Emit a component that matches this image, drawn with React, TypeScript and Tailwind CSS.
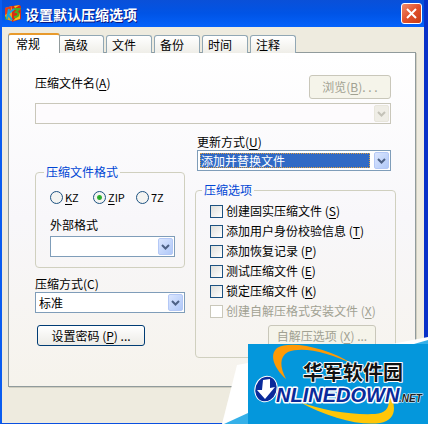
import { useState } from "react";
import type { ReactNode, SelectHTMLAttributes } from "react";
import clsx from "clsx";

const TABS = ["常规", "高级", "文件", "备份", "时间", "注释"];

const FORMATS = [
  { id: "kz", hot: "K", rest: "Z" },
  { id: "zip", hot: "Z", rest: "IP" },
  { id: "7z", hot: "", rest: "7Z" },
];

const OPTIONS = [
  { label: "创建固实压缩文件", hot: "S" },
  { label: "添加用户身份校验信息", hot: "T" },
  { label: "添加恢复记录", hot: "P" },
  { label: "测试压缩文件", hot: "E" },
  { label: "锁定压缩文件", hot: "K" },
  { label: "创建自解压格式安装文件", hot: "X", disabled: true },
];

function Hotkey({ children }: { children: ReactNode }) {
  return (
    <>
      (<span className="underline underline-offset-2">{children}</span>)
    </>
  );
}

type XpSelectProps = SelectHTMLAttributes<HTMLSelectElement> & {
  highlighted?: boolean;
};

function XpSelect({ highlighted, disabled, className, children, ...props }: XpSelectProps) {
  return (
    <div
      className={clsx(
        "relative h-[21px] border p-0.5",
        disabled ? "border-[#c9c7ba] bg-[#fdfbfd]" : "border-[#7f9db9] bg-white",
        className
      )}
    >
      <div className="h-full pr-[18px]">
        <select
          disabled={disabled}
          className={clsx(
            "block h-full w-full appearance-none text-xs leading-[13px] outline-none",
            highlighted
              ? "border border-dotted border-[#e0a040] bg-[#316ac5] text-white"
              : "px-px text-black"
          )}
          {...props}
        >
          {children}
        </select>
      </div>
      <span
        className={clsx(
          "pointer-events-none absolute inset-y-px right-px flex w-[15px] items-center justify-center rounded-xs border",
          disabled
            ? "border-[#e8e6dc] bg-[#efede6] text-[#c4c2b8]"
            : "border-[#b4c8f6] bg-linear-to-br from-[#dbe6fe] to-[#b0c8f8] text-[#4d6185]"
        )}
      >
        <svg width="9" height="6" viewBox="0 0 9 6" className="shrink-0" aria-hidden="true">
          <path d="M1 1l3.500 3.500L8 1" fill="none" stroke="currentColor" strokeWidth="2" />
        </svg>
      </span>
    </div>
  );
}

function AppIcon() {
  return (
    <svg width="17" height="17" viewBox="0 0 17 17" aria-hidden="true">
      <path d="M1 3l7-2v15l-7-2z" fill="#f0a018" />
      <path d="M1 3l7-2-2 6-5 3z" fill="#e33a1b" />
      <path d="M1 11l3 4-3-1z" fill="#37a52e" />
      <path d="M8 1l8-1 1 2v12l-9 3z" fill="#d92b12" />
      <path d="M10 1l6-1-5 3z" fill="#f5c518" />
      <path d="M9 16l7-8v6z" fill="#f5c518" />
      <path d="M10 4h5l-3 3c4 1 3 5-2 5" fill="none" stroke="#4caf20" strokeWidth="2" />
      <path d="M5 4L3 14M10 4L4 9l4 6" fill="none" stroke="#16a4e0" strokeWidth="2" />
    </svg>
  );
}

function Watermark() {
  return (
    <svg
      width="206"
      height="88"
      viewBox="0 0 206 88"
      className="pointer-events-none absolute right-0 bottom-0 z-20"
      role="img"
      aria-label="华军软件园 ONLINEDOWN.NET"
    >
      <path d="M15 29L26 27V88H0z" fill="#fff" />
      <path d="M2 88L26 77v11z" fill="#35b0e8" />
      <path d="M170 8L206 1v7z" fill="#fff" />
      <path d="M192 8L206 4v4z" fill="#35b0e8" />
      <rect x="26" y="8" width="180" height="80" fill="#0497dc" />
      <path
        d="M64 43C52 32 47 19 55 12C68 4 104 11 131 28C106 16 80 10 66 16C57 21 58 31 64 43z"
        fill="#ff9a05"
      />
      <path
        d="M76 65C106 82 138 90 158 87C175 84 175 70 166 53C169 70 166 77 153 78C130 79 100 75 76 65z"
        fill="#ffc608"
      />
      <text
        x="81"
        y="44"
        fontSize="20"
        fontWeight="700"
        fill="#111"
        stroke="#fff"
        strokeWidth="2"
        strokeLinejoin="round"
        paintOrder="stroke"
        fontFamily="'Liberation Sans', 'Noto Sans CJK SC', sans-serif"
      >
        华军软件园
      </text>
      <g fontFamily="'Liberation Sans', sans-serif" fontWeight="700" fontStyle="italic">
        <text
          x="54"
          y="66"
          fontSize="20"
          fill="#0a2a9a"
          stroke="#fff"
          strokeWidth="3"
          strokeLinejoin="round"
          paintOrder="stroke"
        >
          NLINEDOWN
        </text>
        <text
          x="177"
          y="66"
          fontSize="10"
          fill="#222"
          stroke="#fff"
          strokeWidth="1"
          strokeLinejoin="round"
          paintOrder="stroke"
        >
          .NET
        </text>
      </g>
      <ellipse cx="44" cy="53" rx="11" ry="13" transform="rotate(18 44 53)" fill="#0a2a9a" stroke="#fff" strokeWidth="1" />
      <path d="M41 44l7-1 0 9 5-1-10 12-8-9 5 0z" fill="#fff" />
    </svg>
  );
}

export default function App() {
  const [activeTab, setActiveTab] = useState(TABS[0]);
  const [format, setFormat] = useState("zip");

  return (
    <div className="relative">
      <div className="flex min-h-screen w-full flex-col border-r-4 border-b border-l-2 border-r-[#0831c8] border-b-[#0a50e0] border-l-[#0a5cf0] bg-[#eeebdf] font-['Noto_Sans_CJK_SC',sans-serif] text-xs leading-4 text-black">
        {/* Title bar */}
        <header className="flex h-[27px] items-center gap-1 bg-linear-to-b from-[#0a50d8] via-[#0054e6] to-[#0462fb] px-0.5">
          <AppIcon />
          <h1 className="flex-1 text-sm font-bold text-white [text-shadow:1px_1px_#0a1883]">
            设置默认压缩选项
          </h1>
          <button
            type="button"
            aria-label="关闭"
            className="flex size-[21px] items-center justify-center rounded-[3px] border border-white bg-linear-to-br from-[#ee8a68] via-[#e0502c] to-[#c83c14]"
          >
            <svg width="11" height="11" viewBox="0 0 11 11" aria-hidden="true">
              <path d="M1 1l9 9M10 1l-9 9" stroke="#fff" strokeWidth="2" />
            </svg>
          </button>
        </header>

        <main className="flex-1 pt-1.5 pr-2 pb-9 pl-1.5">
          {/* Tabs */}
          <div role="tablist" className="flex h-5 items-end gap-0.5">
            {TABS.map((tab) => (
              <button
                key={tab}
                type="button"
                role="tab"
                aria-selected={tab === activeTab}
                onClick={() => setActiveTab(tab)}
                className={clsx(
                  "rounded-t-[3px] border border-b-0 text-left",
                  tab === activeTab
                    ? "relative z-10 -mr-1 h-5 w-[52px] border-t-2 border-[#919b9c] border-t-[#e89a2c] bg-white pl-[7px]"
                    : "h-[18px] w-[46px] border-[#91a7b4] bg-linear-to-b from-white to-[#efeee8] pl-[5px]"
                )}
              >
                {tab}
              </button>
            ))}
          </div>

          <form
            onSubmit={(e) => e.preventDefault()}
            className="-mt-px border border-[#919b9c] bg-linear-to-b from-white via-[#f8f7fa] to-[#f6f3ec] pt-[22px] pr-[19px] pb-7 pl-[26px] shadow-[1px_1px_0_#d0cec0]"
          >
            <div className="mr-[5px] flex flex-col gap-1">
              <div className="flex items-start justify-between">
                <label htmlFor="archive-name">
                  压缩文件名<Hotkey>A</Hotkey>
                </label>
                <button
                  type="button"
                  disabled
                  className="h-6 w-[82px] rounded-[3px] border border-[#c9c7ba] bg-[#f5f4ea] text-[#a1a192]"
                >
                  浏览<Hotkey>B</Hotkey>. . .
                </button>
              </div>
              <XpSelect id="archive-name" disabled />
            </div>

            <div className="flex gap-2.5">
              {/* Format, method and password */}
              <div className="w-[150px] shrink-0 pt-10">
                <fieldset className="rounded-sm border border-[#d0d0bf] px-[9px] pt-[9px] pb-2.5 pl-3.5">
                  <legend className="-ml-1.5 px-0.5 text-[#0046d5]">压缩文件格式</legend>
                  <div className="-mr-1 grid grid-cols-3 text-[11px]">
                    {FORMATS.map(({ id, hot, rest }) => (
                      <label key={id} className="flex items-center gap-0.5">
                        <input
                          type="radio"
                          name="format"
                          value={id}
                          checked={format === id}
                          onChange={() => setFormat(id)}
                          className="size-[13px] shrink-0 appearance-none rounded-full border border-[#1d5281] bg-[#f4f4f2] checked:bg-[radial-gradient(circle,#21a121_0,#35b335_2px,#f4f4f2_3px)]"
                        />
                        <span>
                          <span className="underline underline-offset-2">{hot}</span>
                          {rest}
                        </span>
                      </label>
                    ))}
                  </div>
                  <label htmlFor="ext-format" className="mt-3 block">
                    外部格式
                  </label>
                  <XpSelect id="ext-format" className="mt-[3px]" />
                </fieldset>

                <label htmlFor="method" className="mt-2 block">
                  压缩方式(C)
                </label>
                <XpSelect id="method" defaultValue="标准">
                  <option>标准</option>
                </XpSelect>
                <button
                  type="button"
                  className="mt-3 ml-0.5 h-[21px] w-[108px] rounded-[3px] border border-[#003c74] bg-linear-to-b from-white to-[#ecebe6]"
                >
                  设置密码 <Hotkey>P</Hotkey> ...
                </button>
              </div>

              {/* Update mode and options */}
              <div className="min-w-0 flex-1 pt-2.5">
                <div className="mr-[5px] ml-0.5">
                  <label htmlFor="update-mode" className="block">
                    更新方式<Hotkey>U</Hotkey>
                  </label>
                  <XpSelect id="update-mode" highlighted defaultValue="添加并替换文件">
                    <option>添加并替换文件</option>
                  </XpSelect>
                </div>

                <fieldset className="mt-[11px] rounded-sm border border-[#d0d0bf] pt-[3px] pr-[19px] pb-2.5 pl-3.5">
                  <legend className="-ml-2 px-0.5 text-[#0046d5]">压缩选项</legend>
                  {OPTIONS.map(({ label, hot, disabled }) => (
                    <label
                      key={hot}
                      className={clsx(
                        "flex h-5 items-center gap-[3px] whitespace-nowrap",
                        disabled && "text-[#a1a192]"
                      )}
                    >
                      <input
                        type="checkbox"
                        disabled={disabled}
                        className="size-[13px] shrink-0 appearance-none border border-[#1d5281] bg-linear-to-br from-[#dfdfdb] to-white checked:bg-[#21a121] disabled:border-[#cac8bb] disabled:from-white"
                      />
                      <span>
                        {label} <Hotkey>{hot}</Hotkey>
                      </span>
                    </label>
                  ))}
                  <div className="mt-1 flex justify-end">
                    <button
                      type="button"
                      disabled
                      className="h-[22px] w-[108px] rounded-[3px] border border-[#c9c7ba] bg-[#f5f4ea] text-[#a1a192]"
                    >
                      自解压选项 <Hotkey>X</Hotkey> ...
                    </button>
                  </div>
                </fieldset>
              </div>
            </div>
          </form>
        </main>
      </div>

      <Watermark />
    </div>
  );
}
